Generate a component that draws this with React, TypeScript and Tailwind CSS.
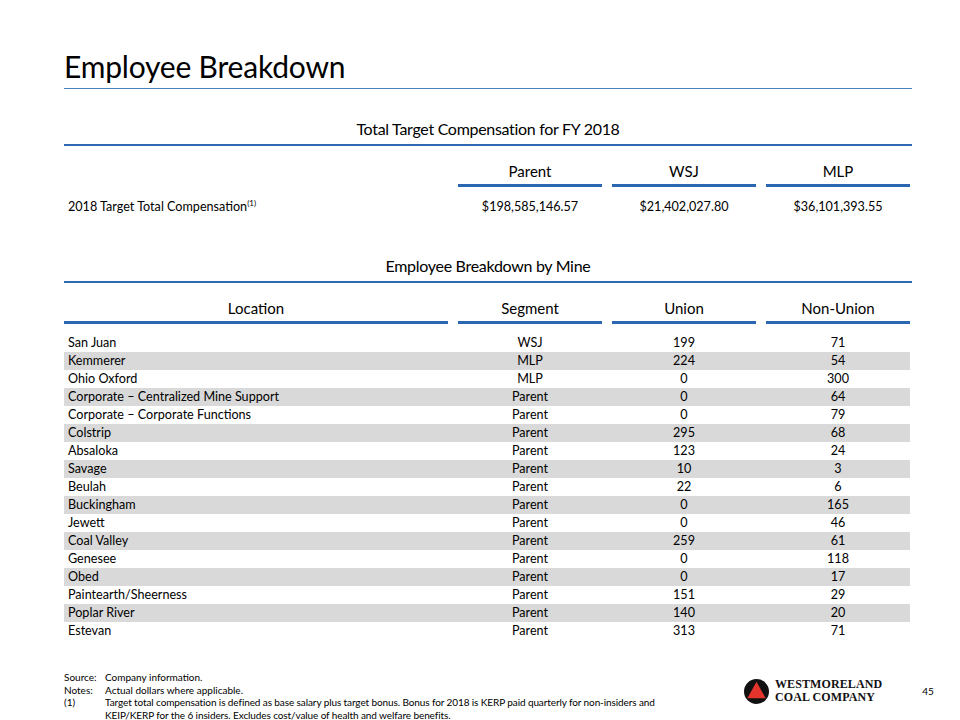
import React from 'react';

const rows: [string, string, string, string][] = [
  ['San Juan', 'WSJ', '199', '71'],
  ['Kemmerer', 'MLP', '224', '54'],
  ['Ohio Oxford', 'MLP', '0', '300'],
  ['Corporate – Centralized Mine Support', 'Parent', '0', '64'],
  ['Corporate – Corporate Functions', 'Parent', '0', '79'],
  ['Colstrip', 'Parent', '295', '68'],
  ['Absaloka', 'Parent', '123', '24'],
  ['Savage', 'Parent', '10', '3'],
  ['Beulah', 'Parent', '22', '6'],
  ['Buckingham', 'Parent', '0', '165'],
  ['Jewett', 'Parent', '0', '46'],
  ['Coal Valley', 'Parent', '259', '61'],
  ['Genesee', 'Parent', '0', '118'],
  ['Obed', 'Parent', '0', '17'],
  ['Paintearth/Sheerness', 'Parent', '151', '29'],
  ['Poplar River', 'Parent', '140', '20'],
  ['Estevan', 'Parent', '313', '71'],
];

const grid = 'grid grid-cols-[384px_144px_144px_144px] gap-x-[10px]';

const ColHead = ({ label }: { label: string }) => (
  <div className="flex flex-col items-center">
    <div className="text-[15px] leading-[18px] pb-[4px]">{label}</div>
    <div className="h-[3px] w-full bg-[#2b66b0]" />
  </div>
);

const SectionHead = ({ title, className }: { title: string; className?: string }) => (
  <div className={className}>
    <div className="text-center text-[16px] tracking-[-0.3px] leading-[20px] pb-[5px]">{title}</div>
    <div className="h-[2px] bg-[#2f6ab3]" />
  </div>
);

const Logo = () => (
  <div className="flex items-center gap-[6px]">
    <svg width="25" height="25" viewBox="0 0 24 24">
      <circle cx="12" cy="12" r="12" fill="#111" />
      <polygon points="12,2.6 3.2,18.4 20.8,18.4" fill="#e4342c" />
    </svg>
    <div className="font-['Liberation_Serif',serif] font-bold text-[12px] leading-[13px] tracking-[0.1px] text-[#111]">
      <div>WESTMORELAND</div>
      <div>COAL COMPANY</div>
    </div>
  </div>
);

export default function App() {
  return (
    <div className="w-[960px] h-[720px] bg-white overflow-hidden font-['Lato',sans-serif] text-black flex flex-col">
      <div className="pl-[64px] pr-[48px] pt-[47px]">
        <h1 className="text-[30px] leading-[38px] pb-[3px] tracking-[-0.2px]">Employee Breakdown</h1>
        <div className="h-px bg-[#4a80c2]" />

        <SectionHead title="Total Target Compensation for FY 2018" className="mt-[30px]" />

        <div className={`${grid} mt-[16px]`}>
          <div />
          <ColHead label="Parent" />
          <ColHead label="WSJ" />
          <ColHead label="MLP" />
        </div>

        <div className={`${grid} mt-[12px] text-[12.6px] leading-[16px]`}>
          <div className="pl-[4px]">
            2018 Target Total Compensation
            <span className="text-[8px] relative top-[-5px]">(1)</span>
          </div>
          <div className="text-center">$198,585,146.57</div>
          <div className="text-center">$21,402,027.80</div>
          <div className="text-center">$36,101,393.55</div>
        </div>

        <SectionHead title="Employee Breakdown by Mine" className="mt-[40px]" />

        <div className={`${grid} mt-[16px]`}>
          <ColHead label="Location" />
          <ColHead label="Segment" />
          <ColHead label="Union" />
          <ColHead label="Non-Union" />
        </div>

        <div className="mt-[10px] w-[846px]">
          {rows.map((r, i) => (
            <div
              key={r[0]}
              className={`${grid} h-[18px] items-center text-[12.6px] leading-[18px] ${i % 2 === 1 ? 'bg-[#d9d9d9]' : ''}`}
            >
              <div className="pl-[4px]">{r[0]}</div>
              <div className="text-center">{r[1]}</div>
              <div className="text-center">{r[2]}</div>
              <div className="text-center">{r[3]}</div>
            </div>
          ))}
        </div>
      </div>

      <div className="flex items-start pl-[64px] mt-[31px] text-[10px] leading-[12.5px]">
        <div className="w-[680px] shrink-0 grid grid-cols-[41px_1fr]">
          <div>Source:</div>
          <div>Company information.</div>
          <div>Notes:</div>
          <div>Actual dollars where applicable.</div>
          <div>(1)</div>
          <div className="whitespace-nowrap tracking-[-0.1px]">
            Target total compensation is defined as base salary plus target bonus. Bonus for 2018 is KERP paid quarterly for non-insiders and
            <br />
            KEIP/KERP for the 6 insiders. Excludes cost/value of health and welfare benefits.
          </div>
        </div>
        <div className="shrink-0 mt-[7px]">
          <Logo />
        </div>
        <div className="shrink-0 ml-[40px] mt-[14px] text-[10px] leading-[12px]">45</div>
      </div>
    </div>
  );
}
